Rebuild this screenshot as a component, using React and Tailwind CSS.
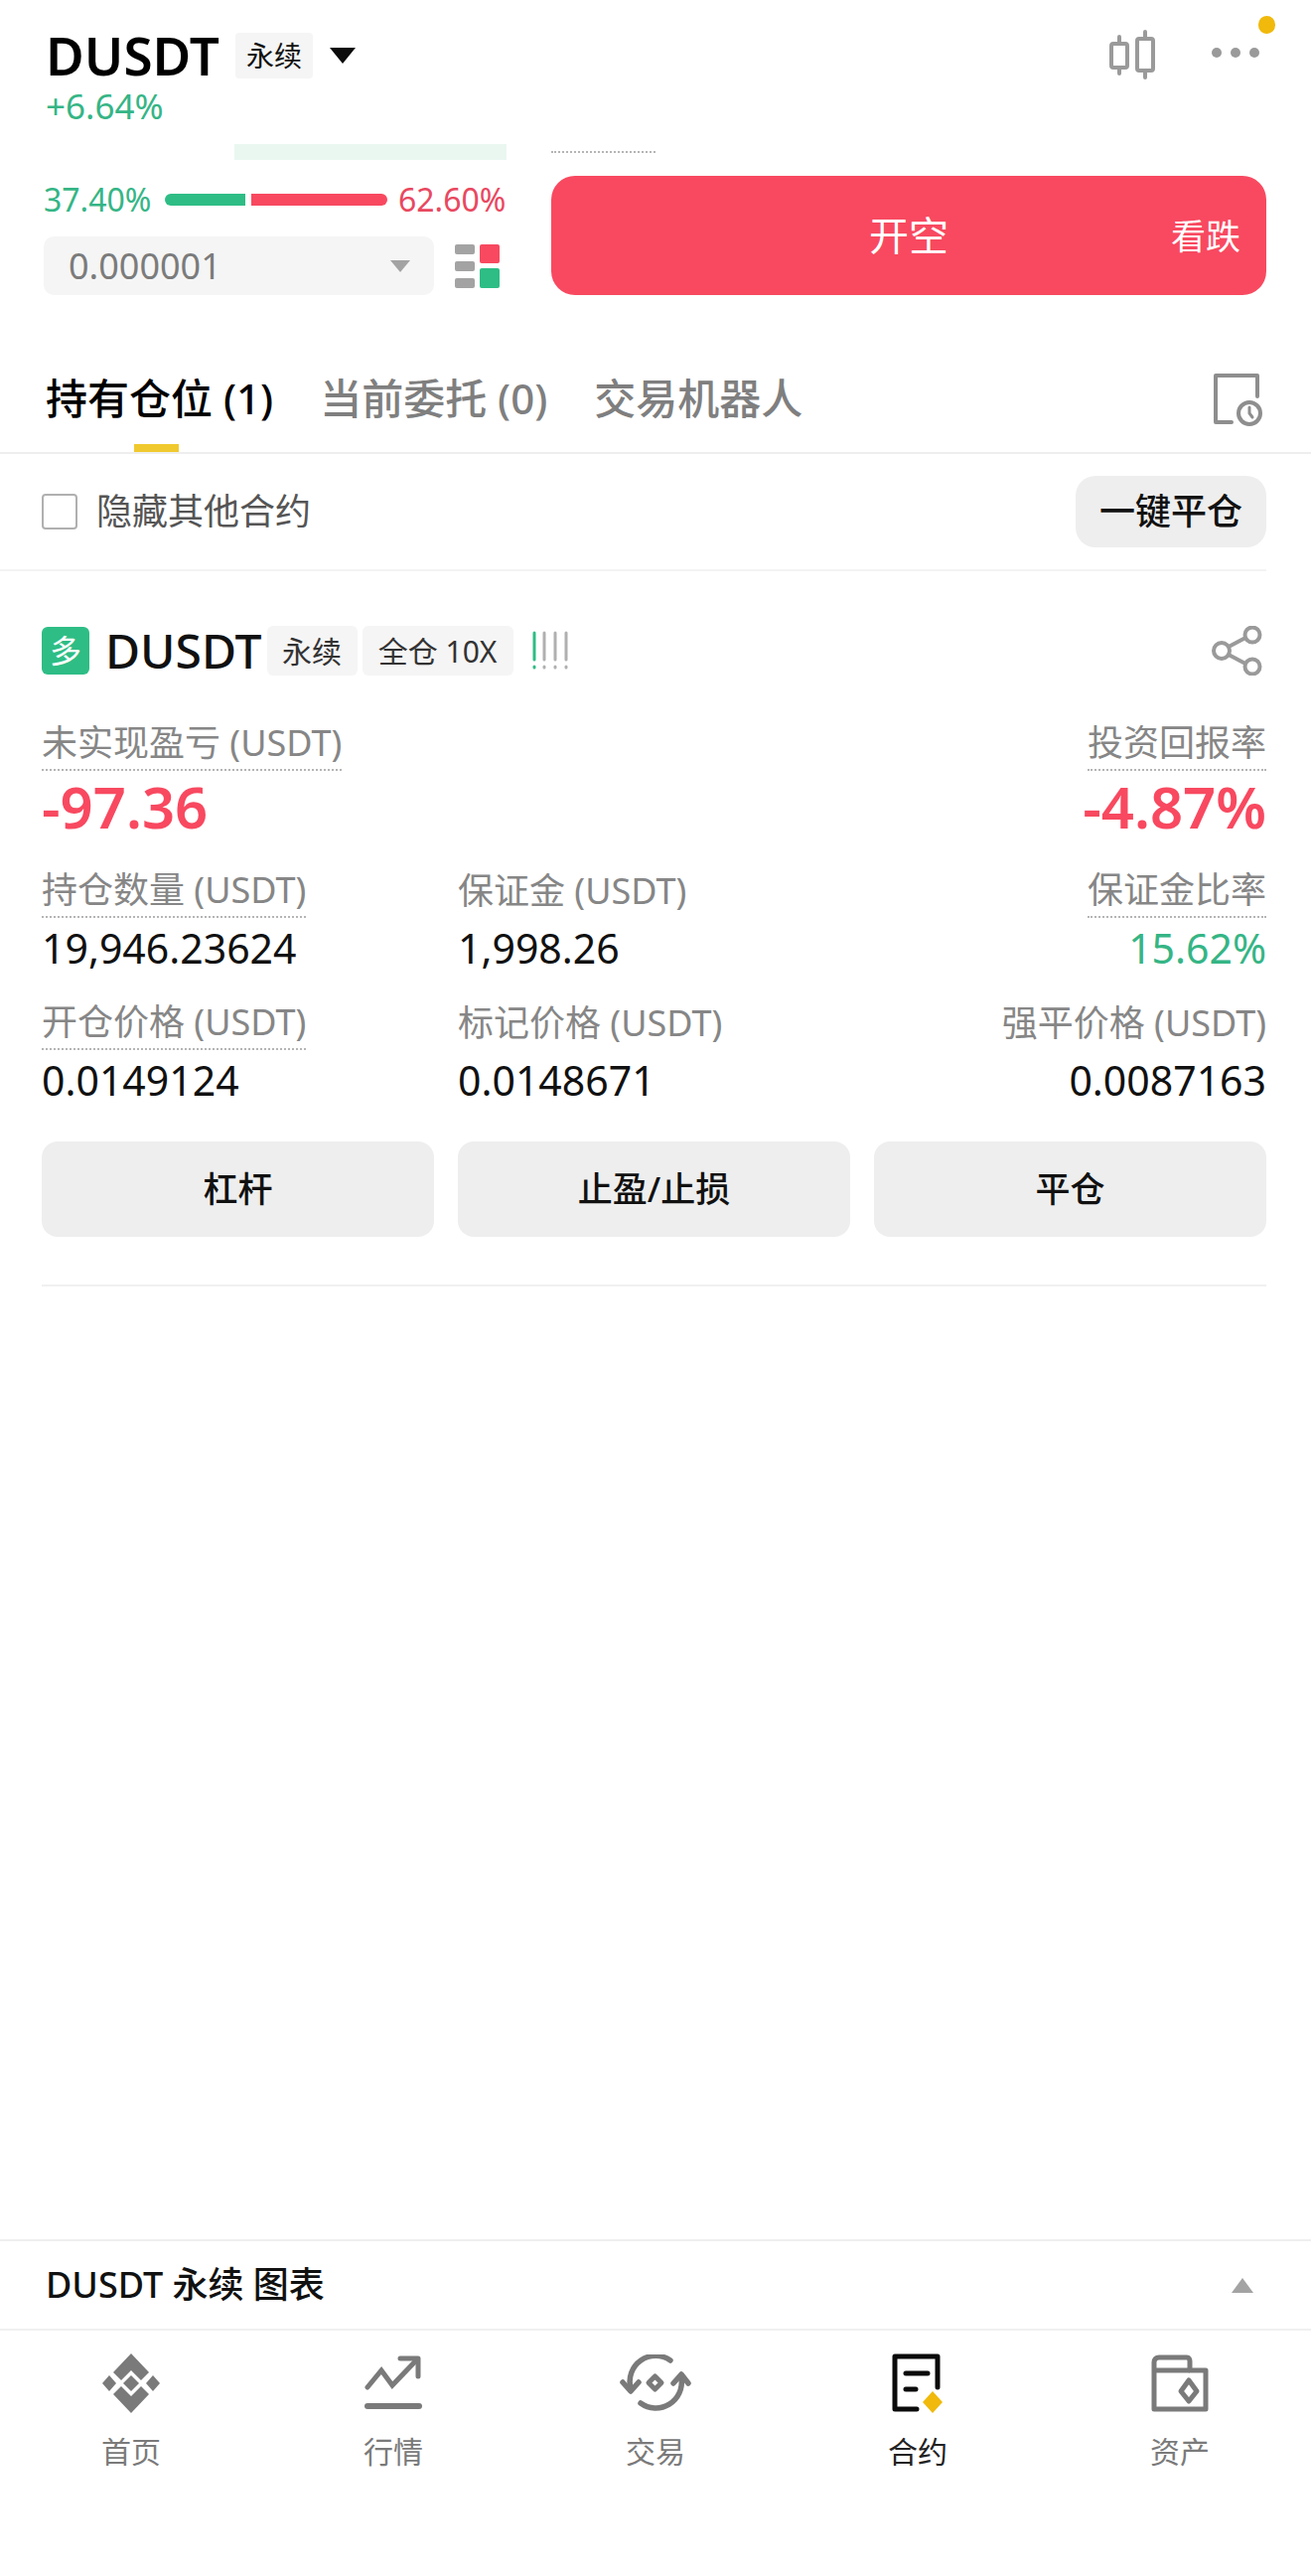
import React from 'react';

const CJK = "font-['Noto_Sans','Noto_Sans_CJK_SC',sans-serif]";

const Metric = ({ label, value, dotted, align = 'left', valueClass = 'text-[#111] text-[41px]', valueH = 'h-[60px]' }) => (
  <div className={`flex flex-col ${align === 'right' ? 'items-end' : 'items-start'}`}>
    <div className={`h-[50px] pb-[4px] flex items-center text-[36px] text-[#868686] whitespace-nowrap leading-none ${dotted ? 'border-b-2 border-dotted border-[#b5b5b5]' : ''}`}>
      {label}
    </div>
    <div className={`${valueH} flex items-center leading-none ${valueClass}`}>{value}</div>
  </div>
);

const Tag = ({ children, className = '' }) => (
  <div className={`h-[50px] flex items-center justify-center rounded-[6px] bg-[#f5f5f5] text-[30px] text-[#333] ${className}`}>{children}</div>
);

const ActionBtn = ({ children }) => (
  <button className="flex-1 h-[96px] rounded-[16px] bg-[#eeeeee] text-[35px] font-medium text-[#111]">{children}</button>
);

const NavItem = ({ icon, label, active }) => (
  <div className="flex-1 flex flex-col items-center">
    <div className="h-[66px] w-[80px] flex items-center justify-center">{icon}</div>
    <div className={`mt-[16px] text-[30px] leading-[40px] ${active ? 'text-[#222]' : 'text-[#7a7a7a]'}`}>{label}</div>
  </div>
);

const HomeIcon = () => (
  <svg width="58" height="60" viewBox="0 0 58 60" fill="#7a7a7a">
    <path d="M29 0 47 19 39 27 29 17 19 27 11 19Z" />
    <path d="M29 22 37 30 29 38 21 30Z" />
    <path d="M7 22 14 30 7 38 0 30Z" />
    <path d="M51 22 58 30 51 38 44 30Z" />
    <path d="M29 60 47 41 39 33 29 43 19 33 11 41Z" />
  </svg>
);

const MarketIcon = () => (
  <svg width="58" height="56" viewBox="0 0 58 56" fill="none" stroke="#7a7a7a" strokeWidth="5" strokeLinecap="round">
    <path d="M3 32 17 15 28 30 53 4" />
    <path d="M36 3H54V21" strokeLinejoin="round" />
    <path d="M3 51H55" strokeWidth="6" />
  </svg>
);

const TradeIcon = () => (
  <svg width="72" height="58" viewBox="0 0 72 58" fill="none" stroke="#7a7a7a" strokeWidth="5.5" strokeLinecap="round" strokeLinejoin="round">
    <path d="M51 6A26 26 0 0 0 11 34" />
    <path d="M3 28 11 37 19 28" />
    <path d="M21 49A26 26 0 0 0 62 24" />
    <path d="M54 29 62 20 69 29" />
    <path d="M35.5 22 42 28.5 35.5 35 29 28.5Z" strokeWidth="5" />
  </svg>
);

const ContractIcon = () => (
  <svg width="52" height="60" viewBox="0 0 52 60" fill="none">
    <path d="M46 34V3H3V56H25" stroke="#0b0b0b" strokeWidth="5" strokeLinecap="round" strokeLinejoin="round" />
    <path d="M14 20H36M14 36H24" stroke="#0b0b0b" strokeWidth="5" strokeLinecap="round" />
    <path d="M41 38 51 49 41 60 31 49Z" fill="#f0b90b" />
  </svg>
);

const AssetIcon = () => (
  <svg width="58" height="58" viewBox="0 0 58 58" fill="none" stroke="#7a7a7a" strokeWidth="5" strokeLinejoin="round">
    <path d="M3 55V8C3 5 5 3 8 3H36C38 3 39 5 39 7V16H55V55Z" />
    <path d="M3 16H39" />
    <path d="M38 26 46 37 38 47 30 37Z" strokeWidth="5" />
  </svg>
);

export default function App() {
  return (
    <div className={`relative w-[1320px] h-[2593px] bg-white flex flex-col overflow-hidden ${CJK}`}>
      {/* top bar */}
      <div className="h-[145px] shrink-0 pl-[46px] pr-[52px] pt-[29px] flex justify-between">
        <div>
          <div className="flex items-center h-[53px]">
            <span className="text-[53px] font-semibold text-black leading-none">DUSDT</span>
            <span className="ml-[16px] w-[78px] h-[46px] flex items-center justify-center rounded-[4px] bg-[#f5f5f5] text-[28px] text-[#111]">永续</span>
            <svg className="ml-[17px]" width="26" height="16" viewBox="0 0 26 16"><path d="M0 0H26L13 16Z" fill="#0b0b0b" /></svg>
          </div>
          <div className="mt-[3px] text-[35px] leading-[44px] text-[#35b585]">+6.64%</div>
        </div>
        <div className="flex items-start gap-[57px] pt-[3px]">
          <svg width="46" height="50" viewBox="0 0 46 50" fill="none" stroke="#9a9a9a" strokeWidth="4" strokeLinecap="round" className="mt-[-2px]">
            <rect x="2" y="14" width="16" height="24" rx="2" />
            <path d="M10 7V14M10 38V44" />
            <rect x="28" y="9" width="16" height="32" rx="2" />
            <path d="M36 2V9M36 41V48" />
          </svg>
          <div className="flex gap-[9px] mt-[16px]">
            <span className="w-[10px] h-[10px] rounded-full bg-[#9a9a9a]" />
            <span className="w-[10px] h-[10px] rounded-full bg-[#9a9a9a]" />
            <span className="w-[10px] h-[10px] rounded-full bg-[#9a9a9a]" />
          </div>
        </div>
      </div>
      <span className="absolute left-[1267px] top-[16px] w-[17px] h-[18px] rounded-full bg-[#f0b90b]" />

      {/* order strip */}
      <div className="flex shrink-0 pl-[44px] pr-[45px] h-[152px]">
        <div className="w-[466px]">
          <div className="ml-[192px] w-[274px] h-[16px] bg-[#eaf7f1]" />
          <div className="mt-[20px] h-[40px] flex items-center">
            <span className="w-[108px] text-[32px] leading-none text-[#35b585]">37.40%</span>
            <div className="ml-[14px] w-[81px] h-[12px] rounded-l-full bg-[#2ebd85]" />
            <div className="ml-[6px] w-[137px] h-[12px] rounded-r-full bg-[#f84960]" />
            <span className="ml-[11px] text-[32px] leading-none text-[#e9485f]">62.60%</span>
          </div>
          <div className="mt-[17px] flex items-center">
            <div className="w-[393px] h-[59px] rounded-[10px] bg-[#f5f5f5] flex items-center justify-between pl-[25px] pr-[24px]">
              <span className="text-[36px] leading-none text-[#7b7b7b]">0.000001</span>
              <svg width="20" height="12" viewBox="0 0 20 12"><path d="M0 0H20L10 12Z" fill="#a3a3a3" /></svg>
            </div>
            <svg className="ml-[21px]" width="45" height="44" viewBox="0 0 45 44">
              <rect x="0" y="0" width="20" height="10" rx="2" fill="#a3a3a3" />
              <rect x="0" y="17" width="20" height="10" rx="2" fill="#a3a3a3" />
              <rect x="0" y="34" width="20" height="10" rx="2" fill="#a3a3a3" />
              <rect x="25" y="0" width="20" height="19" rx="2" fill="#f84960" />
              <rect x="25" y="24" width="20" height="20" rx="2" fill="#2ebd85" />
            </svg>
          </div>
        </div>
        <div className="ml-[45px] flex-1">
          <div className="mt-[7px] w-[105px] border-t-2 border-dotted border-[#b5b5b5]" />
          <button className="relative mt-[23px] w-full h-[120px] rounded-[24px] bg-[#f84960] text-white flex items-center justify-center">
            <span className="text-[40px] leading-none">开空</span>
            <span className="absolute right-[26px] top-1/2 -translate-y-1/2 text-[35px] leading-none">看跌</span>
          </button>
        </div>
      </div>

      {/* tabs */}
      <div className="relative h-[160px] shrink-0 pl-[46px] pr-[48px] flex items-start justify-between border-b-2 border-[#eeeeee]">
        <div className="flex gap-[47px] mt-[79px] text-[42px] leading-[50px] text-[#7f7f7f] whitespace-nowrap">
          <span className="relative font-medium text-black">
            持有仓位 (1)
            <span className="absolute left-[89px] top-[71px] w-[45px] h-[8px] bg-[#f0c92f]" />
          </span>
          <span className="font-medium">当前委托 (0)</span>
          <span className="font-medium">交易机器人</span>
        </div>
        <svg className="mt-[78px]" width="50" height="54" viewBox="0 0 50 54" fill="none" stroke="#8e8e8e" strokeWidth="4" strokeLinecap="round">
          <path d="M44 24V3H2V50H18" strokeLinejoin="round" />
          <circle cx="36" cy="41" r="11" />
          <path d="M36 35V41L39 45" strokeWidth="3" />
        </svg>
      </div>

      {/* hide others row */}
      <div className="h-[118px] shrink-0 mr-[45px] pl-[42px] flex items-center justify-between border-b-2 border-[#f3f3f3]">
        <div className="flex items-center">
          <span className="w-[36px] h-[36px] rounded-[4px] border-2 border-[#b0b0b0]" />
          <span className="ml-[19px] text-[36px] leading-none text-[#555555]">隐藏其他合约</span>
        </div>
        <button className="w-[192px] h-[72px] rounded-[20px] bg-[#eeeeee] text-[36px] font-medium text-[#111]">一键平仓</button>
      </div>

      {/* position card */}
      <div className="shrink-0 ml-[42px] w-[1233px] pt-[55px] pb-[48px] border-b-2 border-[#f0f0f0]">
        <div className="flex items-center justify-between">
          <div className="flex items-center">
            <div className="w-[48px] h-[48px] rounded-[6px] bg-[#2ebd85] flex items-center justify-center text-[32px] leading-none text-white">多</div>
            <span className="ml-[16px] text-[48px] font-medium leading-none text-[#111]">DUSDT</span>
            <Tag className="ml-[5px] w-[91px]">永续</Tag>
            <Tag className="ml-[5px] w-[152px]">全仓 10X</Tag>
            <svg className="ml-[18px]" width="38" height="40" viewBox="0 0 38 40" strokeWidth="3" strokeLinecap="round">
              <path d="M3 2V29M3 36V37" stroke="#2ebd85" />
              <path d="M13 2V29M13 36V37M24 2V29M24 36V37M35 2V29M35 36V37" stroke="#b0b0b0" />
            </svg>
          </div>
          <svg className="mr-[3px]" width="52" height="50" viewBox="0 0 52 50" fill="none" stroke="#9a9a9a" strokeWidth="4">
            <circle cx="10" cy="25" r="8" />
            <circle cx="41" cy="9" r="7.5" />
            <circle cx="41" cy="41" r="7.5" />
            <path d="M17 21 34 12M17 29 34 38" />
          </svg>
        </div>

        <div className="mt-[46px] flex justify-between">
          <Metric dotted label="未实现盈亏 (USDT)" value="-97.36" valueH="h-[72px]" valueClass="text-[58px] font-semibold text-[#f84960]" />
          <Metric dotted align="right" label="投资回报率" value="-4.87%" valueH="h-[72px]" valueClass="text-[58px] font-semibold text-[#f84960]" />
        </div>
        <div className="mt-[26px] grid grid-cols-[419px_1fr_auto]">
          <Metric dotted label="持仓数量 (USDT)" value="19,946.23624" />
          <Metric label="保证金 (USDT)" value="1,998.26" />
          <Metric dotted align="right" label="保证金比率" value="15.62%" valueClass="text-[#35b585] text-[41px]" />
        </div>
        <div className="mt-[23px] grid grid-cols-[419px_1fr_auto]">
          <Metric dotted label="开仓价格 (USDT)" value="0.0149124" />
          <Metric label="标记价格 (USDT)" value="0.0148671" />
          <Metric align="right" label="强平价格 (USDT)" value="0.0087163" />
        </div>
        <div className="mt-[32px] flex gap-[24px]">
          <ActionBtn>杠杆</ActionBtn>
          <ActionBtn>止盈/止损</ActionBtn>
          <ActionBtn>平仓</ActionBtn>
        </div>
      </div>

      <div className="flex-1" />

      {/* chart bar */}
      <div className="h-[90px] shrink-0 border-t-2 border-[#eeeeee] pl-[46px] pr-[58px] flex items-center justify-between">
        <span className="text-[36px] font-medium leading-none text-[#111]">DUSDT 永续 图表</span>
        <svg width="22" height="15" viewBox="0 0 22 15"><path d="M11 0 22 15H0Z" fill="#a3a3a3" /></svg>
      </div>

      {/* bottom nav */}
      <div className="h-[249px] shrink-0 border-t-2 border-[#f0f0f0] pt-[20px] flex">
        <NavItem icon={<HomeIcon />} label="首页" />
        <NavItem icon={<MarketIcon />} label="行情" />
        <NavItem icon={<TradeIcon />} label="交易" />
        <NavItem icon={<ContractIcon />} label="合约" active />
        <NavItem icon={<AssetIcon />} label="资产" />
      </div>
    </div>
  );
}
